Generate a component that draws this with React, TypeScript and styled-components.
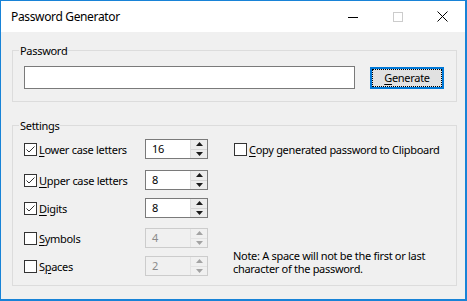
import React from "react";
import styled, { createGlobalStyle } from "styled-components";

const Global = createGlobalStyle`
  html, body { margin: 0; padding: 0; background: #ffffff; }
  body {
    font-family: "Segoe UI", "Noto Sans", "Liberation Sans", sans-serif;
    font-size: 11px;
    letter-spacing: -0.3px;
    color: #000000;
  }
`;

const Window = styled.div`
  width: 467px;
  height: 301px;
  box-sizing: border-box;
  border: 1px solid #1883d7;
  border-right-width: 2px;
  border-bottom-width: 2px;
  display: flex;
  flex-direction: column;
  background: #f0f0f0;
`;

const TitleBar = styled.div`
  height: 31px;
  flex: none;
  background: #ffffff;
  display: flex;
  align-items: center;
  padding-left: 10px;
`;

const Title = styled.div`
  flex: 1;
  font-size: 12px;
  letter-spacing: -0.35px;
  color: #000000;
`;

const CaptionButton = styled.div`
  width: 45px;
  height: 31px;
  display: flex;
  align-items: center;
  justify-content: center;
`;

const Client = styled.div`
  flex: 1;
  display: flex;
  flex-direction: column;
  padding: 0 8px 0 11px;
`;

const Group = styled.fieldset<{ $top: number }>`
  margin: ${(p) => p.$top}px 0 0 0;
  padding: 0;
  min-width: 0;
  border: 1px solid #dcdcdc;
`;

const Legend = styled.legend`
  margin-left: 6px;
  padding: 0 1px;
  line-height: 15px;
  font-size: 11px;
`;

const PasswordRow = styled.div`
  display: flex;
  align-items: center;
  padding: 8px 12px 12px 11px;
`;

const TextInput = styled.div`
  width: 331px;
  height: 23px;
  box-sizing: border-box;
  border: 1px solid #7a7a7a;
  background: #ffffff;
`;

const PushButton = styled.div`
  width: 74px;
  height: 22px;
  margin-left: 15px;
  box-sizing: border-box;
  border: 2px solid #0078d7;
  outline: 1px dotted #000000;
  outline-offset: -3px;
  background: #e1e1e1;
  display: flex;
  align-items: center;
  justify-content: center;
  line-height: 16px;
`;

const SettingsBody = styled.div`
  display: flex;
  padding: 6px 0 9px 11px;
`;

const LeftColumn = styled.div`
  display: flex;
  flex-direction: column;
`;

const RightColumn = styled.div`
  margin-left: 26px;
  display: flex;
  flex-direction: column;
  justify-content: space-between;
`;

const Row = styled.div<{ $gap: number }>`
  height: 20px;
  margin-top: ${(p) => p.$gap}px;
  display: flex;
  align-items: center;
`;

const CheckLabel = styled.label<{ $width?: number }>`
  ${(p) => (p.$width ? `width: ${p.$width}px;` : "")}
  display: flex;
  align-items: center;
  gap: 2px;
  white-space: nowrap;
`;

const Box = styled.span`
  width: 13px;
  height: 13px;
  box-sizing: border-box;
  border: 1px solid #333333;
  background: #ffffff;
  display: flex;
  align-items: center;
  justify-content: center;
  flex: none;
`;

const Mnemonic = styled.span`
  text-decoration: underline;
  text-underline-offset: 2px;
`;

const Spin = styled.div<{ $disabled?: boolean }>`
  width: 63px;
  height: 20px;
  box-sizing: border-box;
  border: 1px solid ${(p) => (p.$disabled ? "#cccccc" : "#7a7a7a")};
  background: ${(p) => (p.$disabled ? "#f0f0f0" : "#ffffff")};
  display: flex;
`;

const SpinValue = styled.div<{ $disabled?: boolean }>`
  flex: 1;
  padding-left: 6px;
  line-height: 18px;
  color: ${(p) => (p.$disabled ? "#8a8a8a" : "#000000")};
`;

const SpinButtons = styled.div<{ $disabled?: boolean }>`
  width: 16px;
  display: flex;
  flex-direction: column;
  border-left: 1px solid ${(p) => (p.$disabled ? "#e3e3e3" : "#dcdcdc")};
`;

const SpinButton = styled.div<{ $disabled?: boolean; $lower?: boolean }>`
  flex: 1;
  display: flex;
  align-items: center;
  justify-content: center;
  background: ${(p) => (p.$disabled ? "#f0f0f0" : "#ececec")};
  ${(p) => (p.$lower ? `border-top: 1px solid ${p.$disabled ? "#e3e3e3" : "#d4d4d4"};` : "")}
`;

const Note = styled.div`
  margin-left: -1px;
  margin-bottom: 1px;
  line-height: 13px;
`;

const Check = () => (
  <svg width="11" height="11" viewBox="0 0 11 11">
    <polyline points="1.5,5.5 4,8 9.5,2.5" fill="none" stroke="#333333" strokeWidth="1" />
  </svg>
);

const Arrow = ({ up, color }: { up: boolean; color: string }) => (
  <svg width="7" height="4" viewBox="0 0 7 4">
    <polygon points={up ? "0,4 7,4 3.5,0" : "0,0 7,0 3.5,4"} fill={color} />
  </svg>
);

type CheckProps = { checked: boolean; pre?: string; mn: string; post: string; width?: number };

const CheckItem = ({ checked, pre, mn, post, width }: CheckProps) => (
  <CheckLabel $width={width}>
    <Box>{checked && <Check />}</Box>
    <span>
      {pre}
      <Mnemonic>{mn}</Mnemonic>
      {post}
    </span>
  </CheckLabel>
);

const SpinBox = ({ value, disabled }: { value: string; disabled?: boolean }) => {
  const c = disabled ? "#a3a3a3" : "#1a1a1a";
  return (
    <Spin $disabled={disabled}>
      <SpinValue $disabled={disabled}>{value}</SpinValue>
      <SpinButtons $disabled={disabled}>
        <SpinButton $disabled={disabled}>
          <Arrow up color={c} />
        </SpinButton>
        <SpinButton $disabled={disabled} $lower>
          <Arrow up={false} color={c} />
        </SpinButton>
      </SpinButtons>
    </Spin>
  );
};

const rows = [
  { gap: 0, checked: true, pre: "", mn: "L", post: "ower case letters", value: "16", disabled: false },
  { gap: 11, checked: true, pre: "", mn: "U", post: "pper case letters", value: "8", disabled: false },
  { gap: 8, checked: true, pre: "", mn: "D", post: "igits", value: "8", disabled: false },
  { gap: 10, checked: false, pre: "", mn: "S", post: "ymbols", value: "4", disabled: true },
  { gap: 8, checked: false, pre: "S", mn: "p", post: "aces", value: "2", disabled: true },
];

export default function App() {
  return (
    <>
      <Global />
      <Window>
        <TitleBar>
          <Title>Password Generator</Title>
          <CaptionButton>
            <svg width="10" height="10" viewBox="0 0 10 10">
              <line x1="0" y1="5.5" x2="10" y2="5.5" stroke="#000" strokeWidth="1" />
            </svg>
          </CaptionButton>
          <CaptionButton>
            <svg width="10" height="10" viewBox="0 0 10 10">
              <rect x="0.5" y="0.5" width="9" height="9" fill="none" stroke="#cccccc" strokeWidth="1" />
            </svg>
          </CaptionButton>
          <CaptionButton>
            <svg width="11" height="11" viewBox="0 0 11 11">
              <line x1="0.5" y1="0.5" x2="10.5" y2="10.5" stroke="#000" strokeWidth="1" />
              <line x1="10.5" y1="0.5" x2="0.5" y2="10.5" stroke="#000" strokeWidth="1" />
            </svg>
          </CaptionButton>
        </TitleBar>
        <Client>
          <Group $top={11}>
            <Legend>Password</Legend>
            <PasswordRow>
              <TextInput />
              <PushButton>
                <span>
                  <Mnemonic>G</Mnemonic>enerate
                </span>
              </PushButton>
            </PasswordRow>
          </Group>
          <Group $top={16}>
            <Legend>Settings</Legend>
            <SettingsBody>
              <LeftColumn>
                {rows.map((r) => (
                  <Row key={r.post} $gap={r.gap}>
                    <CheckItem checked={r.checked} pre={r.pre} mn={r.mn} post={r.post} width={121} />
                    <SpinBox value={r.value} disabled={r.disabled} />
                  </Row>
                ))}
              </LeftColumn>
              <RightColumn>
                <Row $gap={0}>
                  <CheckItem checked={false} mn="C" post="opy generated password to Clipboard" />
                </Row>
                <Note>
                  Note: A space will not be the first or last
                  <br />
                  character of the password.
                </Note>
              </RightColumn>
            </SettingsBody>
          </Group>
        </Client>
      </Window>
    </>
  );
}
